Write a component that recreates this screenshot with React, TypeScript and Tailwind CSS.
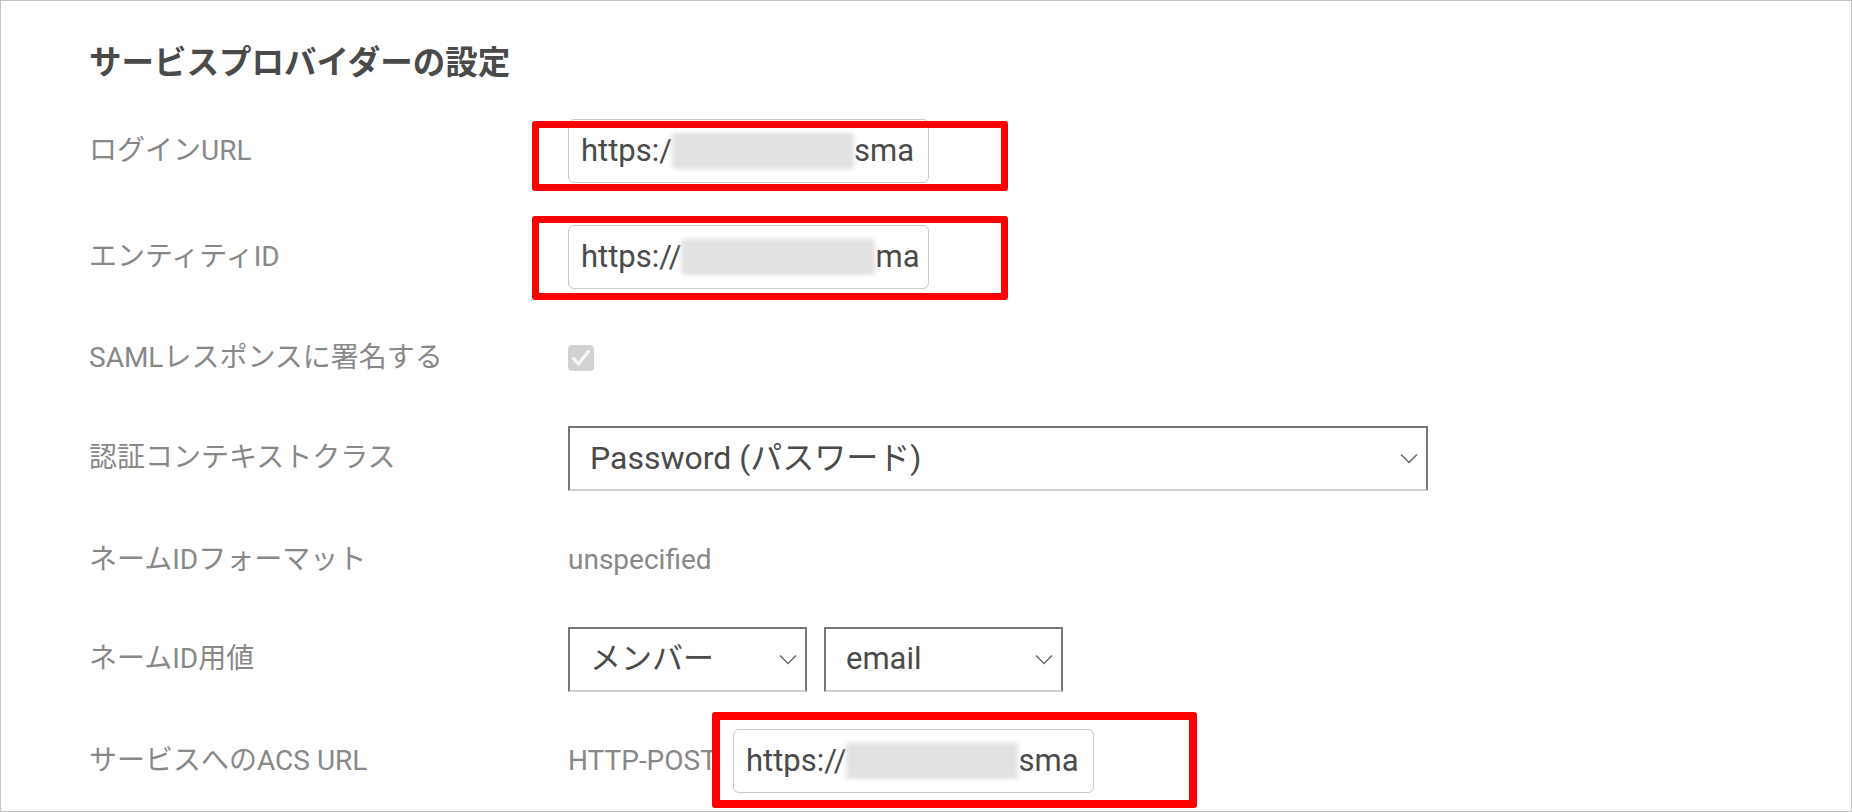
import React from "react";

const font = "font-['Roboto','Noto_Sans_CJK_JP',sans-serif]";

const Chevron = () => (
  <svg width="18" height="11" viewBox="0 0 18 11" fill="none" className="shrink-0">
    <polyline points="1,1.5 9,9.5 17,1.5" stroke="#666666" strokeWidth="1.5" />
  </svg>
);

const Blur = ({ width }: { width: number }) => (
  <div
    className="h-[36px] shrink-0 rounded-[2px] bg-[#e2e2e2] blur-[2px]"
    style={{ width }}
  />
);

const UrlField = ({ head, tail, blur }: { head: string; tail: string; blur: number }) => (
  <div className="flex h-[64px] w-[361px] items-center overflow-hidden rounded-[6px] border border-[#c9c9c9] bg-white pl-3 text-[31px] text-[#4a4a4a]">
    <span>{head}</span>
    <Blur width={blur} />
    <span>{tail}</span>
  </div>
);

const Select = ({ value, width, size = "text-[31px]" }: { value: string; width: string; size?: string }) => (
  <div
    className={`flex h-[65px] ${width} items-center justify-between border-2 border-[#777777] border-b-[#cfcfcf] bg-white pl-5 pr-2 ${size} text-[#4a4a4a]`}
  >
    <span>{value}</span>
    <Chevron />
  </div>
);

const Row = ({ label, mt, children }: { label: string; mt: string; children: React.ReactNode }) => (
  <div className={`flex h-[64px] items-center ${mt}`}>
    <div className="w-[479px] shrink-0 text-[28px] text-[#888888]">{label}</div>
    <div className="flex items-center">{children}</div>
  </div>
);

export default function App() {
  return (
    <div className={`relative h-[812px] w-[1852px] overflow-hidden border border-[#c4c4c4] bg-white ${font}`}>
      <div className="flex flex-col pl-[88px] pt-[42px]">
        <h2 className="text-[32.5px] font-bold leading-[40px] text-[#4a4a4a]">サービスプロバイダーの設定</h2>

        <Row label="ログインURL" mt="mt-[36px]">
          <UrlField head="https:/" blur={182} tail="sma" />
        </Row>

        <Row label="エンティティID" mt="mt-[42px]">
          <UrlField head="https://" blur={194} tail="ma" />
        </Row>

        <Row label="SAMLレスポンスに署名する" mt="mt-[37px]">
          <div className="flex h-[26px] w-[26px] items-center justify-center rounded-[4px] bg-[#d2d2d2]">
            <svg width="20" height="18" viewBox="0 0 20 18" fill="none">
              <path d="M2.5 9.5 L7.5 15 L17.5 2.5" stroke="#f7f7f7" strokeWidth="3.2" strokeLinecap="round" strokeLinejoin="round" />
            </svg>
          </div>
        </Row>

        <Row label="認証コンテキストクラス" mt="mt-[36px]">
          <Select value="Password (パスワード)" width="w-[860px]" size="text-[32px]" />
        </Row>

        <Row label="ネームIDフォーマット" mt="mt-[38px]">
          <span className="text-[28px] text-[#888888]">unspecified</span>
        </Row>

        <Row label="ネームID用値" mt="mt-[35px]">
          <div className="flex gap-[17px]">
            <Select value="メンバー" width="w-[239px]" />
            <Select value="email" width="w-[239px]" />
          </div>
        </Row>

        <Row label="サービスへのACS URL" mt="mt-[38px]">
          <span className="w-[165px] shrink-0 whitespace-nowrap text-[28px] text-[#888888]">HTTP-POST</span>
          <UrlField head="https://" blur={172} tail="sma" />
        </Row>
      </div>

      {/* annotation boxes drawn over the form */}
      <div className="absolute left-[531px] top-[120px] h-[70px] w-[476px] rounded-[3px] border-[7px] border-[#ff0000]" />
      <div className="absolute left-[531px] top-[215px] h-[84px] w-[476px] rounded-[3px] border-[7px] border-[#ff0000]" />
      <div className="absolute left-[711px] top-[711px] h-[96px] w-[485px] rounded-[3px] border-[8px] border-[#ff0000]" />
    </div>
  );
}
